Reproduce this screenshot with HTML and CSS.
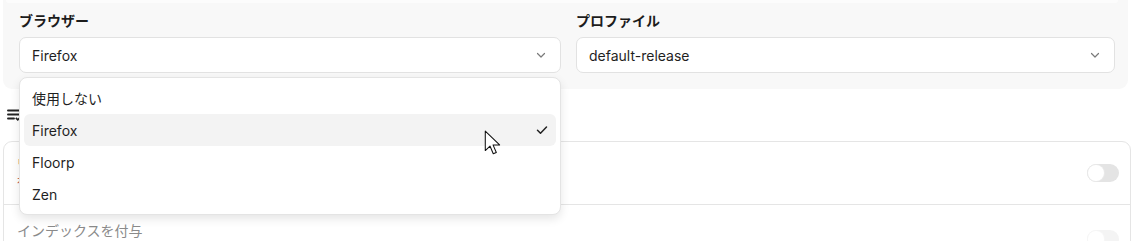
FILE: index.html
```html
<!DOCTYPE html>
<html>
  <head>
    <meta charset="UTF-8">
    <meta name="viewport" content="width=device-width, initial-scale=1.0">
    <link rel="stylesheet" href="styles.css">
    <title>ブラウザー設定</title>
  </head>
  <body>
    <div class="page">
      <section class="panel">
        <div class="panel-top"></div>
        <div class="fields">
          <div class="field">
            <div class="label">ブラウザー</div>
            <div class="select">
              <span>Firefox</span>
              <svg class="chevron" width="12" height="12" viewBox="0 0 12 12"><path d="M2.5 4.5 6 8l3.5-3.5" fill="none" stroke="#7a7a7a" stroke-width="1.2" stroke-linecap="round" stroke-linejoin="round"/></svg>
            </div>
            <ul class="menu">
              <li class="item">使用しない</li>
              <li class="item active">Firefox
                <svg class="check" width="14" height="14" viewBox="0 0 14 14"><path d="M2.5 7.2 5.5 10.2 11.5 4" fill="none" stroke="#222" stroke-width="1.5" stroke-linecap="round" stroke-linejoin="round"/></svg>
              </li>
              <li class="item">Floorp</li>
              <li class="item">Zen</li>
            </ul>
          </div>
          <div class="field">
            <div class="label">プロファイル</div>
            <div class="select">
              <span>default-release</span>
              <svg class="chevron" width="12" height="12" viewBox="0 0 12 12"><path d="M2.5 4.5 6 8l3.5-3.5" fill="none" stroke="#7a7a7a" stroke-width="1.2" stroke-linecap="round" stroke-linejoin="round"/></svg>
            </div>
          </div>
        </div>
      </section>

      <h2 class="heading">
        <svg width="13" height="14" viewBox="0 0 13 14"><path d="M1 2.5h11M1 6.5h11M1 10.5h6" stroke="#222" stroke-width="1.9" stroke-linecap="round"/><path d="M8.8 9.8l2 2 2-2" fill="none" stroke="#222" stroke-width="1.7"/></svg>
        <span>ワークスペース設定</span>
      </h2>

      <div class="card">
        <div class="row">
          <div class="row-text">
            <div class="row-title">ワークスペースを有効化</div>
            <div class="row-note">有効にするにはブラウザーを再起動してください</div>
          </div>
          <span class="toggle"></span>
        </div>
        <div class="row disabled">
          <div class="row-text">
            <div class="row-title">インデックスを付与</div>
          </div>
          <span class="toggle"></span>
        </div>
      </div>
    </div>

    <svg class="cursor" width="19" height="27" viewBox="0 0 16 23"><path d="M1 1v16.5l4-3.8 2.8 6.5 2.6-1.1-2.8-6.4h5.6z" fill="#fff" stroke="#111" stroke-width="0.9" stroke-linejoin="round"/></svg>
  </body>
</html>
```

FILE: styles.css
```css
body {
  margin: 0;
  background: #ffffff;
  font-family: Inter, "Noto Sans CJK JP", sans-serif;
  font-size: 14px;
  color: #1f1f1f;
  overflow: hidden;
  height: 241px;
}

.page {
  padding: 0 2px 0 3px;
}

.panel {
  background: #f8f8f8;
  border-radius: 0 0 9px 9px;
  margin-right: 3px;
  padding: 0 13px 16px 16px;
}

.panel-top {
  height: 3px;
  margin: 0 -3px 9px -13px;
  background: #fcfcfc;
  border-radius: 0 0 8px 8px;
}

.fields {
  display: grid;
  grid-template-columns: 542px 1fr;
  gap: 15px;
}

.field {
  position: relative;
}

.label {
  font-size: 14px;
  font-weight: 700;
  line-height: 18px;
  margin-bottom: 7px;
  color: #1c1c1c;
}

.select {
  display: flex;
  align-items: center;
  justify-content: space-between;
  height: 34px;
  padding: 0 13px 0 12px;
  background: #ffffff;
  border: 1px solid #e2e2e2;
  border-radius: 7px;
}

.menu {
  position: absolute;
  top: calc(100% + 4px);
  left: 0;
  right: 0;
  margin: 0;
  padding: 4px;
  list-style: none;
  background: #ffffff;
  border: 1px solid #e4e4e4;
  border-radius: 8px;
  box-shadow: 0 4px 10px rgba(0, 0, 0, 0.1);
  z-index: 2;
}

.item {
  display: flex;
  align-items: center;
  justify-content: space-between;
  height: 32px;
  padding: 0 7px 0 8px;
  border-radius: 6px;
}

.item.active {
  background: #f3f3f3;
}

.heading {
  display: flex;
  align-items: center;
  gap: 6px;
  margin: 0;
  height: 52px;
  padding-left: 4px;
  font-size: 14px;
  font-weight: 700;
}

.card {
  border: 1px solid #e5e5e5;
  border-radius: 9px;
  overflow: hidden;
}

.row {
  display: flex;
  align-items: center;
  justify-content: space-between;
  height: 62px;
  padding: 0 11px 0 13px;
  border-bottom: 1px solid #e5e5e5;
}

.row-title {
  font-size: 14px;
  line-height: 20px;
}

.row-note {
  font-size: 12px;
  line-height: 18px;
  color: #b5442f;
}

.row.disabled {
  align-items: flex-start;
  height: 45px;
  padding-top: 16px;
}

.row.disabled .row-title {
  color: #8a8a8a;
}

.row.disabled .toggle {
  opacity: 0.4;
  margin-top: 9px;
}

.toggle {
  position: relative;
  width: 32px;
  height: 18px;
  border-radius: 9px;
  background: #e4e4e4;
}

.toggle::after {
  content: "";
  position: absolute;
  top: 1px;
  left: 1px;
  width: 16px;
  height: 16px;
  border-radius: 50%;
  background: #ffffff;
  box-shadow: 0 0 0 1px #e9e9e9;
}

.cursor {
  position: absolute;
  left: 484px;
  top: 130px;
  z-index: 3;
}
```
